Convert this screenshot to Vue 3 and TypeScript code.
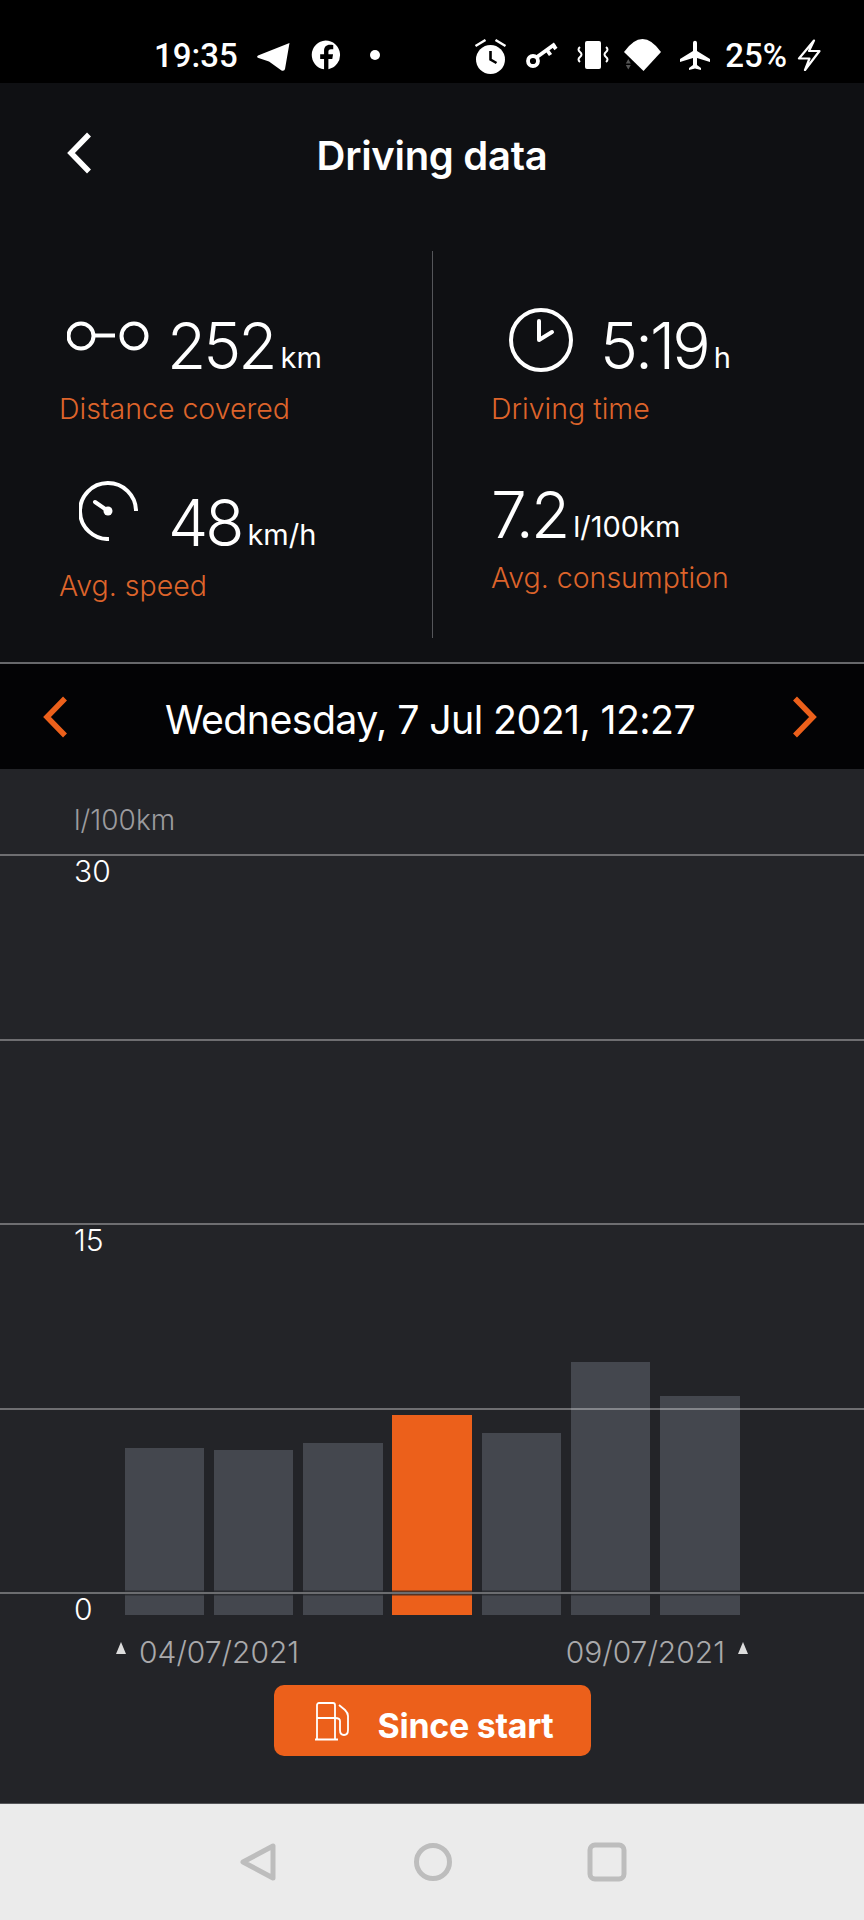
<script setup lang="ts">
interface Bar {
  height: number;
  active?: boolean;
}

const bars: Bar[] = [
  { height: 167 },
  { height: 165 },
  { height: 172 },
  { height: 200, active: true },
  { height: 182 },
  { height: 253 },
  { height: 219 },
];

const ticks = ['30', '', '15', '', '0'];
</script>

<template>
  <div class="phone">
    <div class="statusbar">
      <span class="clock">19:35</span>
      <svg class="ic telegram" viewBox="0 0 33 28"><path d="M32.500 0 1 12.500Q-1 14 1.500 15L12 18.500l12.500 9Q27.500 28.500 28 26z" fill="#fff" /></svg>
      <svg class="ic fb" viewBox="0 0 32 32"><path fill-rule="evenodd" d="M16 1a15 15 0 0 1 3 29.700V20h4l.8-4.800H19v-2.700c0-1.500.7-2.500 2.700-2.500H24V5.800c-1-.2-2.200-.3-3.500-.3-3.700 0-6 2.300-6 6.200v3.500h-4V20h4v10.800A15 15 0 0 1 16 1z" fill="#fff" /></svg>
      <span class="dot"></span>
      <span class="spacer"></span>
      <svg class="ic alarm" viewBox="0 0 35 35">
        <circle cx="16.500" cy="20.500" r="14.500" fill="#fff" />
        <path d="M16.500 12v8.500l6 3.500" fill="none" stroke="#000" stroke-width="2.600" />
        <path d="M1.500 7l10-6M31.500 7l-10-6" stroke="#fff" stroke-width="2.400" />
      </svg>
      <svg class="ic key" viewBox="0 0 33 30">
        <circle cx="7" cy="21" r="5" fill="none" stroke="#fff" stroke-width="3.800" />
        <path d="M11 17 29 4M21 10l3.500 5M27 5l3 4" stroke="#fff" stroke-width="3.800" />
      </svg>
      <svg class="ic vib" viewBox="0 0 33 30">
        <rect x="8" y="1" width="16" height="28" rx="2" fill="#fff" />
        <path d="M3 7q-3 2.500 0 5t0 5 0 5M29 7q3 2.500 0 5t0 5 0 5" fill="none" stroke="#fff" stroke-width="2" />
      </svg>
      <svg class="ic wifi" viewBox="0 0 37 32">
        <path d="M0 13Q18.500-13 37 13L19.500 32z" fill="#fff" />
        <path d="M4.300 20l-2.500 4.500h5zM1.800 26h5l-2.500 4.500z" fill="#555" />
      </svg>
      <svg class="ic plane" viewBox="0 0 32 30"><path d="M14 3c0-3 4-3 4 0v8l13 8v3l-13-4v7l4 3v2l-6-1.500L10 30v-2l4-3v-7L1 22v-3l13-8z" fill="#fff" /></svg>
      <span class="battery">25%</span>
      <svg class="ic bolt" viewBox="0 0 24 32"><path d="M17 1.500 2 19.500h10.500L8 31 22.500 12H12z" fill="none" stroke="#fff" stroke-width="2.200" stroke-linejoin="round" /></svg>
    </div>

    <header class="appbar">
      <svg class="chev back" viewBox="0 0 25 42"><path d="M22 2.500 4 21l18 18.500" fill="none" stroke="#fff" stroke-width="5.500" /></svg>
      <h1>Driving data</h1>
    </header>

    <section class="stats">
      <div class="col left">
        <div class="stat first">
          <div class="line">
            <svg class="trip" viewBox="0 0 82 30">
              <circle cx="14" cy="15" r="12.500" fill="none" stroke="#fff" stroke-width="4" />
              <path d="M26 14.500h22" stroke="#fff" stroke-width="4" />
              <circle cx="67" cy="15" r="12.500" fill="none" stroke="#fff" stroke-width="4" />
            </svg>
            <span class="value">252</span><span class="unit">km</span>
          </div>
          <div class="label">Distance covered</div>
        </div>
        <div class="stat second">
          <div class="line">
            <svg class="gauge" viewBox="0 0 60 60">
              <path d="M57 30A28 28 0 1 0 30 58" fill="none" stroke="#fff" stroke-width="4" />
              <path d="M16 21 29 30" stroke="#fff" stroke-width="4" stroke-linecap="round" />
              <circle cx="29" cy="30" r="4.500" fill="#fff" />
            </svg>
            <span class="value">48</span><span class="unit">km/h</span>
          </div>
          <div class="label">Avg. speed</div>
        </div>
      </div>
      <div class="col right">
        <div class="stat first">
          <div class="line">
            <svg class="watch" viewBox="0 0 64 64">
              <circle cx="32" cy="32" r="30" fill="none" stroke="#fff" stroke-width="4" />
              <path d="M30 13v19l13-8" fill="none" stroke="#fff" stroke-width="4" stroke-linecap="round" stroke-linejoin="round" />
            </svg>
            <span class="value">5:19</span><span class="unit">h</span>
          </div>
          <div class="label">Driving time</div>
        </div>
        <div class="stat second">
          <div class="line">
            <span class="value">7.2</span><span class="unit">l/100km</span>
          </div>
          <div class="label">Avg. consumption</div>
        </div>
      </div>
    </section>

    <nav class="datebar">
      <svg class="chev" viewBox="0 0 25 42"><path d="M22 2.500 4 21l18 18.500" fill="none" stroke="#ec601b" stroke-width="5.500" /></svg>
      <span class="date">Wednesday, 7 Jul 2021, 12:27</span>
      <svg class="chev" viewBox="0 0 25 42"><path d="M3 2.500 21 21 3 39.500" fill="none" stroke="#ec601b" stroke-width="5.500" /></svg>
    </nav>

    <main class="chart">
      <div class="axis-unit">l/100km</div>
      <div class="plot">
        <div class="bars">
          <div
            v-for="(bar, i) in bars"
            :key="i"
            class="bar"
            :class="{ active: bar.active }"
            :style="{ height: bar.height + 'px' }"
          ></div>
        </div>
        <div class="grid">
          <div v-for="(tick, i) in ticks" :key="i" class="gridrow">
            <div class="rule"></div>
            <span class="tick">{{ tick }}</span>
          </div>
        </div>
      </div>
      <div class="range">
        <span class="tri"></span>
        <span class="range-date">04/07/2021</span>
        <span class="spacer"></span>
        <span class="range-date">09/07/2021</span>
        <span class="tri"></span>
      </div>
      <button type="button" class="since">
        <svg class="pump" viewBox="0 0 36 40">
          <path d="M3 38V4a2 2 0 0 1 2-2h14a2 2 0 0 1 2 2v34M1 38.500h23M3 17h18" fill="none" stroke="#fff" stroke-width="1.800" />
          <path d="M25 4l6 5c2 2 3 3 3 6v14c0 3-1.500 5-4 5s-4-2-4-5V20c0-2-1.500-3-5-3" fill="none" stroke="#fff" stroke-width="1.800" />
        </svg>
        <span class="since-text">Since start</span>
      </button>
    </main>

    <footer class="navbar">
      <svg class="navic" viewBox="0 0 38 40"><path d="M34 4v32L4 20z" fill="none" stroke="#bdbdbd" stroke-width="5" stroke-linejoin="round" /></svg>
      <svg class="navic" viewBox="0 0 40 40"><circle cx="20" cy="20" r="16.500" fill="none" stroke="#bdbdbd" stroke-width="5" /></svg>
      <svg class="navic" viewBox="0 0 40 40"><rect x="3" y="3" width="34" height="34" rx="5" fill="none" stroke="#bdbdbd" stroke-width="5" /></svg>
    </footer>
  </div>
</template>

<style scoped>
.phone {
  width: 864px;
  height: 1920px;
  display: flex;
  flex-direction: column;
  background: #0f1013;
  color: #fff;
  font-family: Inter, "Noto Sans", sans-serif;
  overflow: hidden;
}

.statusbar {
  height: 83px;
  flex: none;
  display: flex;
  align-items: center;
  box-sizing: border-box;
  padding: 27px 43px 0 154px;
  background: #000;
  font-family: Roboto, sans-serif;
  font-weight: 500;
  font-size: 33px;
}

.ic {
  display: block;
  flex: none;
}

.telegram {
  width: 33px;
  height: 28px;
  margin: 4px 0 0 19px;
}

.fb {
  width: 31px;
  height: 32px;
  margin-left: 20px;
}

.dot {
  width: 10px;
  height: 10px;
  margin-left: 29px;
  border-radius: 50%;
  background: #fff;
}

.spacer {
  flex: 1;
}

.alarm {
  width: 35px;
  height: 35px;
  margin-top: 3px;
}

.key {
  width: 33px;
  height: 30px;
  margin-left: 17px;
}

.vib {
  width: 33px;
  height: 30px;
  margin-left: 18px;
}

.wifi {
  width: 37px;
  height: 32px;
  margin-left: 14px;
}

.plane {
  width: 32px;
  height: 30px;
  margin-left: 18px;
}

.battery {
  margin-left: 14px;
}

.bolt {
  width: 24px;
  height: 32px;
  margin-left: 10px;
}

.appbar {
  height: 144px;
  flex: none;
  display: flex;
  align-items: center;
  justify-content: center;
  position: relative;
}

.appbar h1 {
  margin: 0;
  font-size: 40px;
  font-weight: 600;
  letter-spacing: -0.3px;
}

.chev {
  width: 25px;
  height: 42px;
  flex: none;
}

.back {
  position: absolute;
  left: 67px;
  top: 49px;
}

.stats {
  height: 437px;
  flex: none;
  display: grid;
  grid-template-columns: 1fr 1fr;
  box-sizing: border-box;
  padding: 24px 0;
  border-bottom: 2px solid #67686b;
}

.col {
  display: flex;
  flex-direction: column;
}

.left {
  padding-left: 59px;
}

.right {
  padding-left: 58px;
  border-left: 1px solid #55565a;
}

.line {
  display: flex;
  align-items: flex-end;
  height: 66px;
}

.value {
  font-size: 64px;
  line-height: 58px;
  font-weight: 300;
  letter-spacing: -3px;
}

.unit {
  font-size: 29px;
  line-height: 34px;
  margin-left: 6px;
}

.label {
  margin-top: 16px;
  font-size: 28.500px;
  line-height: 36px;
  font-weight: 350;
  color: #dd642b;
}

.left .first,
.right .first {
  margin-top: 58px;
}

.left .second {
  margin-top: 59px;
}

.right .second {
  margin-top: 51px;
}

.trip {
  width: 82px;
  height: 30px;
  margin: 0 18px 24px 8px;
}

.gauge {
  width: 60px;
  height: 60px;
  margin: 0 29px 11px 20px;
}

.watch {
  width: 64px;
  height: 64px;
  margin: 0 27px 3px 18px;
}

.datebar {
  height: 105px;
  flex: none;
  display: flex;
  align-items: center;
  justify-content: space-between;
  box-sizing: border-box;
  padding: 0 47px 0 43px;
  background: #030305;
}

.date {
  padding-top: 5px;
  font-size: 39.300px;
  font-weight: 400;
  letter-spacing: -0.6px;
}

.chart {
  flex: 1;
  display: flex;
  flex-direction: column;
  background: #232428;
  border-bottom: 1px solid #55565a;
}

.axis-unit {
  margin: 36px 0 0 74px;
  height: 49px;
  font-size: 28px;
  line-height: 30px;
  color: #9b9b9e;
  font-weight: 300;
}

.plot {
  position: relative;
  height: 761px;
}

.grid {
  position: relative;
}

.gridrow {
  height: 184.500px;
  padding-left: 74px;
  position: relative;
}

.rule {
  height: 2px;
  margin-left: -74px;
  background: rgba(255, 255, 255, 0.34);
}

.gridrow:last-child .rule {
  background: #6c6d70;
  box-shadow: 0 0 0 1.500px rgba(35, 36, 40, 0.75);
}

.tick {
  display: block;
  margin-top: -1px;
  font-size: 30px;
  line-height: 32px;
  font-weight: 300;
}

.bars {
  position: absolute;
  left: 124.500px;
  top: 0;
  bottom: 0;
  display: flex;
  align-items: flex-end;
  gap: 9.750px;
}

.bar {
  width: 79.500px;
  background: #44474e;
}

.bar.active {
  background: #ec601b;
}

.range {
  display: flex;
  align-items: center;
  margin-top: 20px;
  padding: 0 116px;
  height: 34px;
}

.tri {
  width: 0;
  height: 0;
  border-left: 5.500px solid transparent;
  border-right: 5.500px solid transparent;
  border-bottom: 12px solid #ddd;
  margin-bottom: 8px;
}

.range-date {
  font-size: 30px;
  font-weight: 300;
  color: #a9a9ab;
  margin: 0 13px;
}

.since {
  align-self: center;
  margin-top: 16px;
  width: 317px;
  height: 71px;
  display: flex;
  align-items: center;
  gap: 28px;
  padding: 0 0 0 40px;
  border: none;
  border-radius: 10px;
  background: #ec601b;
  color: #fff;
  font-family: inherit;
  font-size: 34px;
  font-weight: 700;
  letter-spacing: -0.3px;
}

.since-text {
  padding-top: 10px;
}

.pump {
  width: 36px;
  height: 40px;
  flex: none;
}

.navbar {
  height: 116px;
  flex: none;
  display: flex;
  align-items: center;
  justify-content: space-between;
  box-sizing: border-box;
  padding: 0 237px 0 238px;
  background: #ebebeb;
}

.navic {
  width: 40px;
  height: 40px;
}
</style>

<style>
html,
body {
  margin: 0;
  background: #000;
}
</style>
